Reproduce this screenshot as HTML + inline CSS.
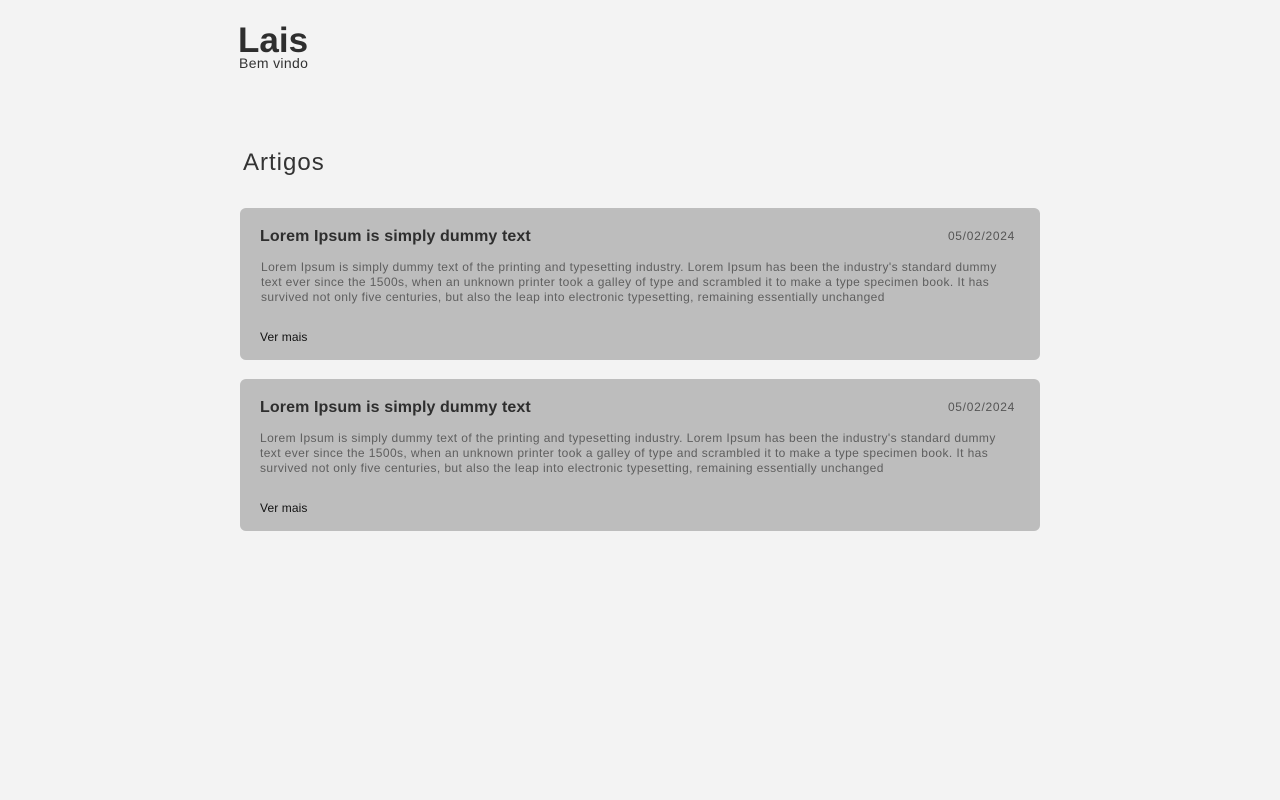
<!DOCTYPE html>
<html><head><meta charset="utf-8"><style>
body{margin:0;background:#f3f3f3;font-family:"Liberation Sans",sans-serif;color:#333;width:1280px;height:800px;position:relative;overflow:hidden}
.a{position:absolute;white-space:nowrap}
.card{position:absolute;left:240px;width:800px;height:152px;background:#bdbdbd;border-radius:6px}
.t{position:absolute;left:20px;top:20px;font-size:16px;font-weight:bold;color:#2e2e2e;letter-spacing:0.1px}
.d{position:absolute;right:25px;top:21px;font-size:12px;color:#555;letter-spacing:0.7px}
.b{position:absolute;left:21px;top:52px;font-size:12px;line-height:15px;color:#5e5e5e;white-space:nowrap;letter-spacing:0.4px}
.v{position:absolute;left:20px;top:122px;font-size:12px;color:#111;letter-spacing:0.1px}
</style></head><body>
<div class="a" style="left:238px;top:20px;font-size:35px;font-weight:bold;color:#2e2e2e;line-height:42px">Lais</div>
<div class="a" style="left:239px;top:55px;font-size:14px;color:#333;line-height:16px;letter-spacing:0.35px">Bem vindo</div>
<div class="a" style="left:243px;top:148px;font-size:24px;color:#333;line-height:30px;letter-spacing:1px">Artigos</div>
<div class="card" style="top:208px">
<div class="t">Lorem Ipsum is simply dummy text</div><div class="d">05/02/2024</div>
<div class="b">Lorem Ipsum is simply dummy text of the printing and typesetting industry. Lorem Ipsum has been the industry's standard dummy<br>text ever since the 1500s, when an unknown printer took a galley of type and scrambled it to make a type specimen book. It has<br>survived not only five centuries, but also the leap into electronic typesetting, remaining essentially unchanged</div>
<div class="v">Ver mais</div></div>
<div class="card" style="top:379px">
<div class="t">Lorem Ipsum is simply dummy text</div><div class="d">05/02/2024</div>
<div class="b" style="left:20px">Lorem Ipsum is simply dummy text of the printing and typesetting industry. Lorem Ipsum has been the industry's standard dummy<br>text ever since the 1500s, when an unknown printer took a galley of type and scrambled it to make a type specimen book. It has<br>survived not only five centuries, but also the leap into electronic typesetting, remaining essentially unchanged</div>
<div class="v">Ver mais</div></div>
</body></html>
